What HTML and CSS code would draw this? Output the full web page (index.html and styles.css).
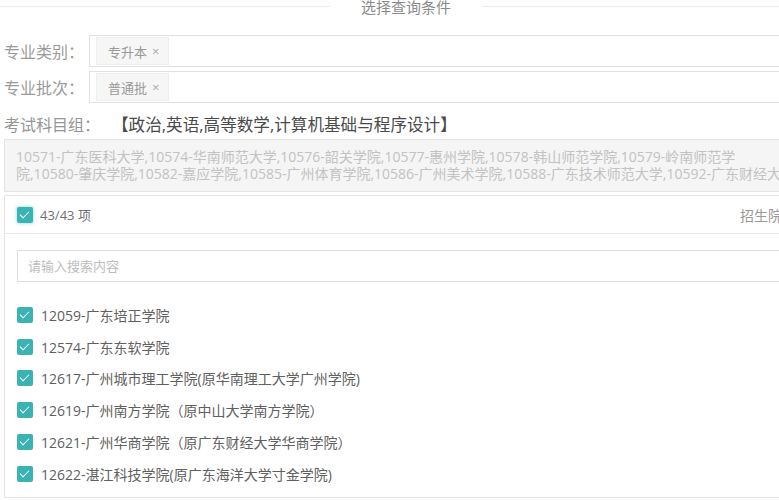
FILE: index.html
```html
<!DOCTYPE html>
<html lang="zh-CN">
<head>
<meta charset="utf-8">
<title>选择查询条件</title>
<link rel="stylesheet" href="styles.css">
</head>
<body>
<div class="page">
  <div class="legend">
    <span class="rule"></span>
    <span class="legend-text">选择查询条件</span>
    <span class="rule"></span>
  </div>

  <div class="field">
    <span class="field-label">专业类别：</span>
    <div class="select"><span class="tag">专升本 <span class="tag-x">×</span></span></div>
  </div>
  <div class="field field-second">
    <span class="field-label">专业批次：</span>
    <div class="select"><span class="tag">普通批 <span class="tag-x">×</span></span></div>
  </div>

  <div class="subject">
    <span class="subject-label">考试科目组：</span>
    <span class="subject-value">【政治,英语,高等数学,计算机基础与程序设计】</span>
  </div>

  <div class="school-box">
    <div class="school-line">10571-广东医科大学,10574-华南师范大学,10576-韶关学院,10577-惠州学院,10578-韩山师范学院,10579-岭南师范学</div>
    <div class="school-line">院,10580-肇庆学院,10582-嘉应学院,10585-广州体育学院,10586-广州美术学院,10588-广东技术师范大学,10592-广东财经大学</div>
  </div>

  <div class="transfer">
    <div class="transfer-head">
      <span class="check check-focus"></span>
      <span class="count">43/43 项</span>
      <span class="head-title">招生院校</span>
    </div>
    <div class="transfer-body">
      <div class="search">请输入搜索内容</div>
      <ul class="items">
        <li class="item"><span class="check"></span>12059-广东培正学院</li>
        <li class="item"><span class="check"></span>12574-广东东软学院</li>
        <li class="item"><span class="check"></span>12617-广州城市理工学院(原华南理工大学广州学院)</li>
        <li class="item"><span class="check"></span>12619-广州南方学院（原中山大学南方学院）</li>
        <li class="item"><span class="check"></span>12621-广州华商学院（原广东财经大学华商学院）</li>
        <li class="item"><span class="check"></span>12622-湛江科技学院(原广东海洋大学寸金学院)</li>
      </ul>
    </div>
  </div>
</div>
</body>
</html>
```

FILE: styles.css
```css
html, body {
  margin: 0;
  padding: 0;
  background: #ffffff;
  overflow: hidden;
}

body {
  font-family: "Open Sans", "Noto Sans CJK SC", sans-serif;
  color: #555;
}

.page {
  width: 812px;
}

/* fieldset-style heading */
.legend {
  display: flex;
  align-items: center;
  height: 12px;
  margin-top: 0;
}

.rule {
  flex: 1;
  height: 1px;
  background: #ececec;
}

.legend-text {
  position: relative;
  top: 1px;
  padding: 0 31px;
  font-size: 15px;
  line-height: 12px;
  color: #8a8a8a;
}

/* label + tag select rows */
.field {
  display: flex;
  align-items: center;
  margin-top: 23px;
  padding-left: 4px;
}

.field-second {
  margin-top: 4px;
}

.field-label {
  width: 85px;
  font-size: 16px;
  color: #9a9a9a;
}

.select {
  flex: 1;
  display: flex;
  align-items: center;
  height: 30px;
  padding: 0 6px;
  border: 1px solid #e0e0e0;
}

.tag {
  display: inline-flex;
  align-items: center;
  height: 26px;
  padding: 0 9px 0 11px;
  background: #f6f6f6;
  border: 1px solid #eeeeee;
  font-size: 13px;
  color: #999;
}

.tag-x {
  margin-left: 5px;
  font-size: 13px;
  color: #aaa;
}

/* subject group */
.subject {
  display: flex;
  align-items: center;
  height: 22px;
  margin-top: 10px;
  padding-left: 4px;
}

.subject-label {
  font-size: 16px;
  color: #959595;
}

.subject-value {
  margin-left: 12px;
  font-size: 16.6px;
  color: #4a4a4a;
}

/* read-only school list */
.school-box {
  margin: 4px 0 0 4px;
  height: 49px;
  padding: 0 0 2px 11px;
  background: #f5f5f5;
  border: 1px solid #e4e4e4;
  box-sizing: content-box;
  display: flex;
  flex-direction: column;
  justify-content: center;
}

.school-line {
  font-size: 14px;
  line-height: 17px;
  color: #c2c2c2;
  white-space: nowrap;
  overflow: hidden;
}

/* transfer panel */
.transfer {
  margin: 3px 0 0 4px;
  border: 1px solid #e5e5e5;
}

.transfer-head {
  display: flex;
  align-items: center;
  height: 37px;
  padding: 0 15px 0 12px;
  border-bottom: 1px solid #e8e8e8;
}

.count {
  margin-left: 7px;
  font-size: 13px;
  color: #707070;
}

.head-title {
  margin-left: auto;
  font-size: 14px;
  color: #999;
}

.transfer-body {
  padding: 16px 0 7px 12px;
}

.search {
  height: 30px;
  line-height: 30px;
  padding-left: 10px;
  border: 1px solid #dedede;
  font-size: 13px;
  color: #bdbdbd;
}

.items {
  list-style: none;
  margin: 17px 0 0;
  padding: 0;
}

.item {
  display: flex;
  align-items: center;
  height: 31.8px;
  font-size: 14px;
  color: #606060;
  white-space: nowrap;
}

/* checked checkbox */
.check {
  position: relative;
  flex: none;
  width: 16px;
  height: 16px;
  margin-right: 8px;
  border-radius: 2px;
  background: #3ab3b5;
}

.check::after {
  content: "";
  position: absolute;
  left: 5px;
  top: 2px;
  width: 4px;
  height: 8px;
  border: solid #fff;
  border-width: 0 1.5px 1.5px 0;
  transform: rotate(45deg);
}

.check-focus {
  box-shadow: 0 0 3px 1px rgba(58, 179, 181, 0.35);
}

.transfer-head .check {
  margin-right: 0;
}
```
